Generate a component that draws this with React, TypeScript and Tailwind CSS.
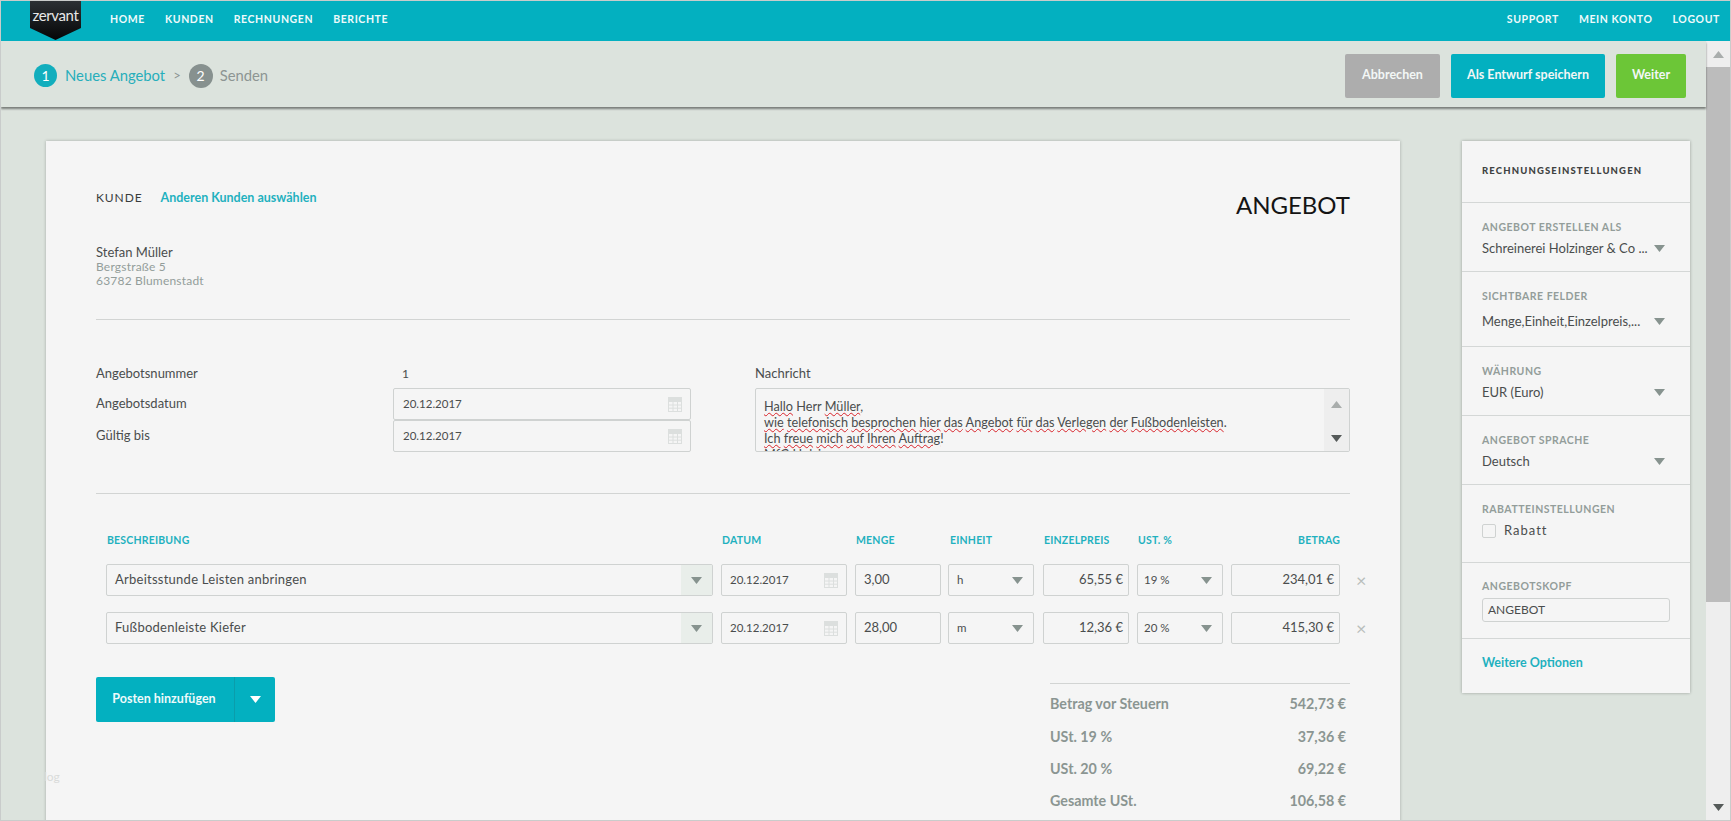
import type { ReactNode } from "react";

// Angebot editor screen: top nav, step bar, document card and settings card.

const Caret = ({ className = "fill-[#87938f]" }: { className?: string }) => (
  <svg width="11" height="7" viewBox="0 0 11 7" className={`shrink-0 ${className}`}>
    <polygon points="0,0 11,0 5.5,7" />
  </svg>
);

const CalendarIcon = () => (
  <svg width="14" height="15" viewBox="0 0 14 15" fill="none" stroke="#dcdfde" strokeWidth="1" className="shrink-0">
    <rect x="0.5" y="0.5" width="13" height="14" />
    <path d="M0.5 4.5H13.5M0.5 8H13.5M0.5 11.2H13.5M5 4.5V14.5M9.5 4.5V14.5" />
    <rect x="0.5" y="0.5" width="13" height="4" fill="#dcdfde" />
  </svg>
);

const Spell = ({ children }: { children: ReactNode }) => (
  <span className="underline decoration-wavy decoration-[#d8232a] decoration-1 underline-offset-1">{children}</span>
);

const NavLink = ({ children }: { children: ReactNode }) => (
  <a className="text-[10.5px] font-bold tracking-[0.6px] text-[#eefafb] leading-none">{children}</a>
);

const HeaderButton = ({ children, className }: { children: ReactNode; className: string }) => (
  <button className={`h-[44px] rounded-[2px] text-[12.5px] font-bold text-[#f3f7f6] ${className}`}>{children}</button>
);

const Box = ({ children, className = "" }: { children: ReactNode; className?: string }) => (
  <div className={`h-[32px] shrink-0 flex items-center border border-[#cfd2d1] rounded-[2px] bg-[#f5f5f5] text-[13px] text-[#4a4d4d] ${className}`}>
    {children}
  </div>
);

function ItemRow(props: { title: string; qty: string; unit: string; price: string; tax: string; total: string }) {
  return (
    <div className="flex items-center h-[32px]">
      <Box className="w-[607px] pl-2 justify-between overflow-hidden">
        <span className="tracking-[0.25px]">{props.title}</span>
        <span className="w-[31px] h-full bg-[#e9eeea] flex items-center justify-center">
          <Caret />
        </span>
      </Box>
      <Box className="w-[126px] ml-[8px] px-2 justify-between">
        <span className="text-[11.5px]">20.12.2017</span>
        <CalendarIcon />
      </Box>
      <Box className="w-[86px] ml-[8px] px-2">{props.qty}</Box>
      <Box className="w-[86px] ml-[7px] pl-2 pr-[10px] justify-between">
        <span className="text-[11.5px]">{props.unit}</span>
        <Caret />
      </Box>
      <Box className="w-[86px] ml-[9px] px-[5px] justify-end">{props.price}</Box>
      <Box className="w-[86px] ml-[8px] pl-[6px] pr-[10px] justify-between">
        <span className="text-[11.5px]">{props.tax}</span>
        <Caret />
      </Box>
      <Box className="w-[109px] ml-[8px] px-[5px] justify-end">{props.total}</Box>
      <span className="ml-[16px] text-[18px] leading-none text-[#b9bebc]">×</span>
    </div>
  );
}

const SettingsSection = ({ label, children, className }: { label: string; children: ReactNode; className: string }) => (
  <div className={`pl-[20px] pr-[21px] border-b border-[#d4d7d6] ${className}`}>
    <div className="text-[10.5px] font-bold tracking-[0.5px] text-[#939d9a] leading-[14px]">{label}</div>
    {children}
  </div>
);

const SettingsSelect = ({ value, className = "mt-[6px]" }: { value: string; className?: string }) => (
  <div className={`flex items-center justify-between pr-[4px] text-[13px] leading-[16px] text-[#4a4d4d] ${className}`}>
    <span>{value}</span>
    <Caret />
  </div>
);

const TotalRow = ({ label, value, className }: { label: string; value: string; className: string }) => (
  <div className={`flex justify-between pr-[4px] text-[14.3px] font-bold text-[#8b9592] leading-[18px] ${className}`}>
    <span>{label}</span>
    <span>{value}</span>
  </div>
);

export default function App() {
  return (
    <div className="h-[821px] overflow-hidden flex flex-col border border-[#c9cccb] bg-[#dce3dd] font-['Lato',sans-serif] relative">
      {/* Top nav */}
      <header className="h-[40px] shrink-0 bg-[#03b0c0] flex items-center">
        <svg width="51" height="40" viewBox="0 0 51 40" className="ml-[29px] shrink-0 self-start">
          <defs>
            <linearGradient id="logoFill" x1="0" y1="0" x2="0" y2="1">
              <stop offset="0" stopColor="#2c3034" />
              <stop offset="1" stopColor="#050607" />
            </linearGradient>
          </defs>
          <polygon points="0,0 51,0 51,27 25.5,39 0,27" fill="url(#logoFill)" />
          <text x="25.5" y="20" textAnchor="middle" fontSize="15" fill="#e8e8e8" fontFamily="Lato, sans-serif" letterSpacing="-0.4">
            zervant
          </text>
        </svg>
        <nav className="ml-[29px] pb-[4px] flex gap-[20px]">
          <NavLink>HOME</NavLink>
          <NavLink>KUNDEN</NavLink>
          <NavLink>RECHNUNGEN</NavLink>
          <NavLink>BERICHTE</NavLink>
        </nav>
        <nav className="ml-auto mr-[10px] pb-[4px] flex gap-[20px]">
          <NavLink>SUPPORT</NavLink>
          <NavLink>MEIN KONTO</NavLink>
          <NavLink>LOGOUT</NavLink>
        </nav>
      </header>

      <div className="flex-1 min-h-0 flex">
        <div className="flex-1 min-w-0 flex flex-col">
          {/* Step bar */}
          <div className="h-[66px] shrink-0 flex items-center pt-[3px] pl-[33px] pr-[20px] shadow-[0_2px_2px_rgba(0,0,0,0.45)] relative">
            <span className="w-[23px] h-[23px] rounded-full bg-[#12aebd] text-white text-[14px] flex items-center justify-center">1</span>
            <span className="ml-[8px] text-[14.8px] text-[#27aebb]">Neues Angebot</span>
            <span className="ml-[8px] text-[13px] text-[#8d9593]">&gt;</span>
            <span className="ml-[8px] w-[24px] h-[24px] rounded-full bg-[#87918f] text-white text-[14px] flex items-center justify-center">2</span>
            <span className="ml-[7px] text-[14.8px] text-[#8d9593]">Senden</span>
            <div className="ml-auto flex gap-[11px]">
              <HeaderButton className="w-[95px] bg-[#adadad]">Abbrechen</HeaderButton>
              <HeaderButton className="w-[154px] bg-[#03b0c0]">Als Entwurf speichern</HeaderButton>
              <HeaderButton className="w-[70px] bg-[#6cc637]">Weiter</HeaderButton>
            </div>
          </div>

          <div className="flex-1 min-h-0 flex items-start pt-[34px] pl-[45px] overflow-hidden">
            {/* Document */}
            <main className="w-[1354px] h-[700px] shrink-0 bg-[#f5f5f5] shadow-[0_0_3px_rgba(0,0,0,0.25)] px-[50px] pt-[49px]">
              <div className="flex justify-between items-start h-[129px]">
                <div>
                  <div className="flex items-center h-[16px]">
                    <span className="text-[12px] tracking-[0.9px] text-[#3a3d3d]">KUNDE</span>
                    <span className="ml-[18px] text-[12.5px] font-bold text-[#1fb1bf]">Anderen Kunden auswählen</span>
                  </div>
                  <div className="mt-[39px] text-[13px] leading-[15px] text-[#4a4d4d]">Stefan Müller</div>
                  <div className="text-[12px] leading-[14px] text-[#939d9a] tracking-[0.2px]">Bergstraße 5</div>
                  <div className="text-[12px] leading-[14px] text-[#939d9a] tracking-[0.2px]">63782 Blumenstadt</div>
                </div>
                <div className="text-[24px] leading-[28px] text-[#141414] mt-[1px]">ANGEBOT</div>
              </div>
              <div className="border-t border-[#d2d4d3]" />

              <div className="mt-[40px] flex text-[13px] text-[#4a4d4d]">
                <div className="w-[297px] shrink-0">
                  <div className="h-[28px] flex items-center">Angebotsnummer</div>
                  <div className="h-[32px] flex items-center">Angebotsdatum</div>
                  <div className="h-[32px] flex items-center">Gültig bis</div>
                </div>
                <div className="w-[298px] shrink-0">
                  <div className="h-[28px] flex items-center pl-[9px] text-[12px]">1</div>
                  <Box className="pl-[9px] pr-[8px] justify-between">
                    <span className="text-[11.5px]">20.12.2017</span>
                    <CalendarIcon />
                  </Box>
                  <Box className="pl-[9px] pr-[8px] justify-between">
                    <span className="text-[11.5px]">20.12.2017</span>
                    <CalendarIcon />
                  </Box>
                </div>
                <div className="ml-[64px] flex-1 min-w-0">
                  <div className="h-[28px] flex items-center">Nachricht</div>
                  <div className="h-[64px] flex border border-[#cfd2d1] rounded-[2px] overflow-hidden">
                    <div className="flex-1 pl-2 pt-[9px] text-[12.7px] leading-[16px] whitespace-nowrap overflow-hidden">
                      <div><Spell>Hallo</Spell> Herr <Spell>Müller</Spell>,</div>
                      <div>
                        <Spell>wie</Spell> <Spell>telefonisch</Spell> <Spell>besprochen</Spell> <Spell>hier</Spell> <Spell>das</Spell> <Spell>Angebot</Spell> <Spell>für</Spell> <Spell>das</Spell> <Spell>Verlegen</Spell> <Spell>der</Spell> <Spell>Fußbodenleisten</Spell>.
                      </div>
                      <div>
                        <Spell>Ich</Spell> <Spell>freue</Spell> <Spell>mich</Spell> <Spell>auf</Spell> <Spell>Ihren</Spell> <Spell>Auftrag</Spell>!
                      </div>
                      <div>MfG Holzinger</div>
                    </div>
                    <div className="w-[25px] bg-[#eeeeee] flex flex-col items-center justify-between pt-[12px] pb-[9px]">
                      <Caret className="rotate-180 fill-[#a9adac]" />
                      <Caret className="fill-[#555a59]" />
                    </div>
                  </div>
                </div>
              </div>

              <div className="mt-[41px] border-t border-[#d2d4d3]" />

              {/* Line items */}
              <div className="mt-[39px] pl-[10px]">
                <div className="flex h-[16px] items-center text-[10.5px] font-bold tracking-[0.2px] text-[#1fb1bf]">
                  <span className="w-[615px] pl-px">BESCHREIBUNG</span>
                  <span className="w-[134px] pl-px">DATUM</span>
                  <span className="w-[94px] pl-px">MENGE</span>
                  <span className="w-[94px] pl-px">EINHEIT</span>
                  <span className="w-[94px] pl-px">EINZELPREIS</span>
                  <span className="w-[94px] pl-px">UST. %</span>
                  <span className="w-[109px] text-right">BETRAG</span>
                </div>
                <div className="mt-[15px] flex flex-col gap-[16px]">
                  <ItemRow title="Arbeitsstunde Leisten anbringen" qty="3,00" unit="h" price="65,55 €" tax="19 %" total="234,01 €" />
                  <ItemRow title="Fußbodenleiste Kiefer" qty="28,00" unit="m" price="12,36 €" tax="20 %" total="415,30 €" />
                </div>
              </div>

              <div className="mt-[33px] flex justify-between items-start">
                <div className="w-[179px] h-[45px] bg-[#03b0c0] rounded-[2px] flex text-[#eefafb]">
                  <button className="w-[139px] pr-[2px] text-[12.5px] font-bold border-r border-[#0a9dab]">Posten hinzufügen</button>
                  <span className="flex-1 flex items-center justify-center">
                    <Caret className="fill-white" />
                  </span>
                </div>
                <div className="w-[300px] mt-[6px] border-t border-[#d2d4d3]">
                  <TotalRow className="mt-[11px]" label="Betrag vor Steuern" value="542,73 €" />
                  <TotalRow className="mt-[15px]" label="USt. 19 %" value="37,36 €" />
                  <TotalRow className="mt-[14px]" label="USt. 20 %" value="69,22 €" />
                  <TotalRow className="mt-[14px]" label="Gesamte USt." value="106,58 €" />
                </div>
              </div>
            </main>

            {/* Settings */}
            <aside className="ml-[62px] w-[228px] shrink-0 bg-[#f5f5f5] shadow-[0_0_3px_rgba(0,0,0,0.3)]">
              <div className="h-[62px] pl-[20px] flex items-center border-b border-[#d4d7d6] text-[9.5px] font-black tracking-[1.15px] text-[#3f4242]">
                RECHNUNGSEINSTELLUNGEN
              </div>
              <SettingsSection label="ANGEBOT ERSTELLEN ALS" className="h-[69px] pt-[17px]">
                <SettingsSelect value="Schreinerei Holzinger & Co ..." />
              </SettingsSection>
              <SettingsSection label="SICHTBARE FELDER" className="h-[75px] pt-[17px]">
                <SettingsSelect value="Menge,Einheit,Einzelpreis,..." className="mt-[10px]" />
              </SettingsSection>
              <SettingsSection label="WÄHRUNG" className="h-[69px] pt-[17px]">
                <SettingsSelect value="EUR (Euro)" />
              </SettingsSection>
              <SettingsSection label="ANGEBOT SPRACHE" className="h-[69px] pt-[17px]">
                <SettingsSelect value="Deutsch" />
              </SettingsSection>
              <SettingsSection label="RABATTEINSTELLUNGEN" className="h-[78px] pt-[17px]">
                <div className="mt-[5px] flex items-center gap-[8px]">
                  <span className="w-[14px] h-[14px] border border-[#cfd2d1] rounded-[2px]" />
                  <span className="text-[13px] tracking-[1px] text-[#4a4d4d]">Rabatt</span>
                </div>
              </SettingsSection>
              <SettingsSection label="ANGEBOTSKOPF" className="h-[76px] pt-[16px]">
                <div className="mt-[5px] h-[24px] w-[188px] px-[5px] flex items-center border border-[#cfd2d1] rounded-[3px] text-[12px] text-[#4a4d4d]">
                  ANGEBOT
                </div>
              </SettingsSection>
              <div className="h-[54px] pl-[20px] pb-[6px] flex items-center text-[12.5px] font-bold text-[#1fb1bf]">Weitere Optionen</div>
            </aside>
          </div>
        </div>

        {/* Scrollbar */}
        <div className="w-[24px] shrink-0 bg-[#eeeeee] flex flex-col items-center">
          <div className="h-[26px] flex items-center">
            <Caret className="rotate-180 fill-[#a9adac]" />
          </div>
          <div className="w-full h-[535px] bg-[#bcbcbc]" />
          <div className="mt-auto h-[26px] flex items-center">
            <Caret className="fill-[#555a59]" />
          </div>
        </div>
      </div>

      {/* faint leftover label sitting over the card edge */}
      <span className="absolute left-[43px] top-[767px] text-[12px] text-[#d9dbda]">log</span>
    </div>
  );
}
